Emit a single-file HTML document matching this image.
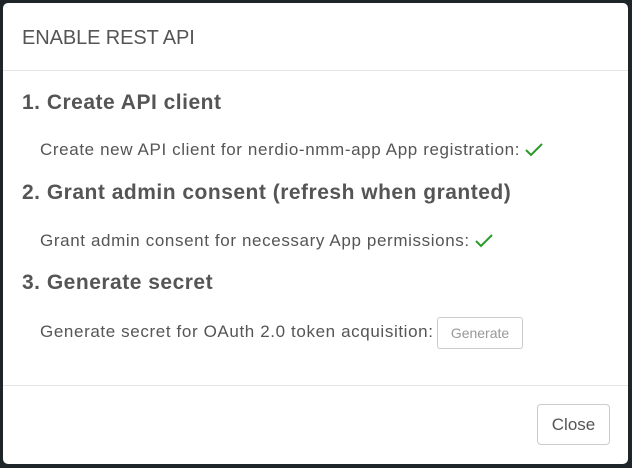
<!DOCTYPE html>
<html><head><style>
body{margin:0;width:632px;height:468px;background:#1d2528;font-family:"Liberation Sans",sans-serif;overflow:hidden;position:relative}
.m{position:absolute;left:3px;top:3px;width:625px;height:461px;background:#fff;border-radius:5px}
.h{position:absolute;left:19px;top:24px;font-size:20px;color:#555;letter-spacing:-0.1px}
.l1{position:absolute;left:0;right:0;top:67px;border-top:1px solid #e5e5e5}
.l2{position:absolute;left:0;right:0;top:382px;border-top:1px solid #e5e5e5}
.t{position:absolute;left:19px;font-size:21px;font-weight:bold;color:#555;letter-spacing:0.5px}
.p{position:absolute;left:37px;font-size:17px;color:#555;letter-spacing:0.62px;white-space:nowrap}
.ck{display:inline-block;vertical-align:-3px;margin-left:4px}
.g{position:absolute;left:434px;top:314px;width:86px;height:32px;border:1px solid #ccc;border-radius:3px;box-sizing:border-box;font-size:14px;color:#999;text-align:center;line-height:30px}
.c{position:absolute;left:534px;top:401px;width:73px;height:41px;border:1px solid #ccc;border-radius:4px;box-sizing:border-box;font-size:17px;color:#555;text-align:center;line-height:39px}
</style></head><body>
<div class="m">
<div class="h">ENABLE REST API</div>
<div class="l1"></div>
<div class="t" style="top:88px">1. Create API client</div>
<div class="p" style="top:137px">Create new API client for nerdio-nmm-app App registration:<svg class="ck" width="20" height="16" viewBox="0 0 20 16"><path d="M2 8 L7 13 L18 2" stroke="#2a9a2a" stroke-width="2" fill="none"/></svg></div>
<div class="t" style="top:178px">2. Grant admin consent (refresh when granted)</div>
<div class="p" style="top:228px">Grant admin consent for necessary App permissions:<svg class="ck" width="20" height="16" viewBox="0 0 20 16"><path d="M2 8 L7 13 L18 2" stroke="#2a9a2a" stroke-width="2" fill="none"/></svg></div>
<div class="t" style="top:268px">3. Generate secret</div>
<div class="p" style="top:319px">Generate secret for OAuth 2.0 token acquisition:</div>
<div class="g">Generate</div>
<div class="l2"></div>
<div class="c">Close</div>
</div>
</body></html>
